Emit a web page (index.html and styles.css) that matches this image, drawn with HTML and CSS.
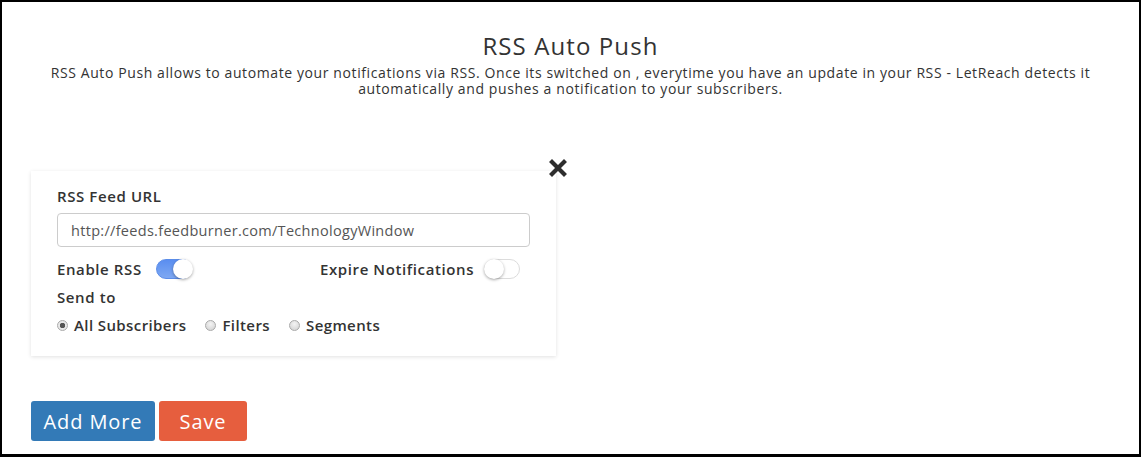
FILE: index.html
```html
<!DOCTYPE html>
<html lang="en">
<head>
<meta charset="UTF-8">
<meta name="viewport" content="width=device-width, initial-scale=1.0">
<title>RSS Auto Push</title>
<link rel="stylesheet" href="styles.css">
</head>
<body>

<div class="frame">
  <h2 class="title">RSS Auto Push</h2>
  <p class="intro">RSS Auto Push allows to automate your notifications via RSS. Once its switched on , everytime you have an update in your RSS - LetReach detects it<br>automatically and pushes a notification to your subscribers.</p>

  <div class="card">
    <svg class="close" width="18" height="18" viewBox="0 0 18 18">
      <path d="M3 3 L15 15 M15 3 L3 15" stroke="#2d2d2d" stroke-width="4.2" stroke-linecap="square"/>
    </svg>

    <label class="label" for="feed">RSS Feed URL</label>
    <input type="text" id="feed" class="url" value="http://feeds.feedburner.com/TechnologyWindow">

    <div class="switches">
      <div class="switch-group first">
        <span class="label">Enable RSS</span>
        <span class="toggle on"><span class="knob"></span></span>
      </div>
      <div class="switch-group second">
        <span class="label">Expire Notifications</span>
        <span class="toggle"><span class="knob"></span></span>
      </div>
    </div>

    <div class="label send">Send to</div>
    <div class="radios">
      <span class="radio-item"><span class="radio checked"></span>All Subscribers</span>
      <span class="radio-item"><span class="radio"></span>Filters</span>
      <span class="radio-item"><span class="radio"></span>Segments</span>
    </div>
  </div>

  <div class="actions">
    <button class="btn btn-blue">Add More</button>
    <button class="btn btn-orange">Save</button>
  </div>
</div>

</body>
</html>
```

FILE: styles.css
```css
html, body {
  margin: 0;
  padding: 0;
  background: #fff;
}

.frame {
  box-sizing: border-box;
  width: 1141px;
  height: 457px;
  border: 2px solid #000;
  border-bottom-width: 3px;
  padding: 0 29px;
  font-family: "Open Sans", sans-serif;
  color: #333;
}

.title {
  margin: 31px 0 0;
  font-size: 24px;
  line-height: 26px;
  font-weight: 400;
  letter-spacing: 1.1px;
  text-align: center;
}

.intro {
  margin: 6px 0 0;
  font-size: 14px;
  line-height: 16px;
  letter-spacing: 0.6px;
  text-align: center;
}

.card {
  position: relative;
  width: 525px;
  box-sizing: border-box;
  margin-top: 74px;
  padding: 15px 26px 21px 26px;
  background: #fff;
  box-shadow: 0 1px 4px rgba(0, 0, 0, 0.12);
}

.close {
  position: absolute;
  right: -11px;
  top: -12px;
}

.label {
  display: block;
  font-size: 15px;
  line-height: 20px;
  font-weight: 600;
  letter-spacing: 0.6px;
  color: #333;
}

.url {
  display: block;
  width: 100%;
  height: 34px;
  margin-top: 7px;
  padding: 0 13px;
  box-sizing: border-box;
  border: 1px solid #ccc;
  border-radius: 4px;
  font-family: "Open Sans", sans-serif;
  font-size: 14.5px;
  letter-spacing: 0.3px;
  color: #555;
}

.switches {
  display: flex;
  align-items: center;
  margin-top: 11px;
  height: 22px;
}

.switch-group {
  display: flex;
  align-items: center;
  gap: 14px;
}

.switch-group.first {
  width: 263px;
}

.switch-group.second {
  gap: 10px;
}

.toggle {
  position: relative;
  display: inline-block;
  width: 36px;
  height: 20px;
  border-radius: 11px;
  border: 1px solid #dcdcdc;
  background: #fff;
  box-sizing: border-box;
}

.toggle.on {
  border-color: #5b8de9;
  background: linear-gradient(#5a8ef0, #7ea8f2);
}

.knob {
  position: absolute;
  left: -1px;
  top: -1px;
  width: 20px;
  height: 20px;
  border-radius: 50%;
  background: #fff;
  box-shadow: 0 1px 3px rgba(0, 0, 0, 0.35);
}

.toggle.on .knob {
  left: auto;
  right: -2px;
}

.send {
  margin-top: 7px;
}

.radios {
  display: flex;
  margin-top: 8px;
  gap: 19px;
  font-size: 15px;
  line-height: 20px;
  font-weight: 600;
  letter-spacing: 0.4px;
}

.radio-item {
  display: flex;
  align-items: center;
}

.radio {
  display: inline-block;
  width: 11px;
  height: 11px;
  margin-right: 6px;
  border-radius: 50%;
  box-sizing: border-box;
  border: 1px solid #aaa;
  background: radial-gradient(circle at 50% 35%, #f4f4f4, #cfcfcf);
}

.radio.checked {
  background: radial-gradient(circle, #555 0 2.5px, #e8e8e8 3px);
}

.actions {
  display: flex;
  gap: 4px;
  margin-top: 45px;
}

.btn {
  height: 40px;
  padding: 0;
  border: none;
  border-radius: 3px;
  color: #fff;
  font-family: "Open Sans", sans-serif;
  font-size: 20px;
  letter-spacing: 0.9px;
  cursor: pointer;
}

.btn-blue {
  width: 124px;
  background-color: #337ab7;
}

.btn-orange {
  width: 88px;
  background-color: #e65e3e;
}
```
